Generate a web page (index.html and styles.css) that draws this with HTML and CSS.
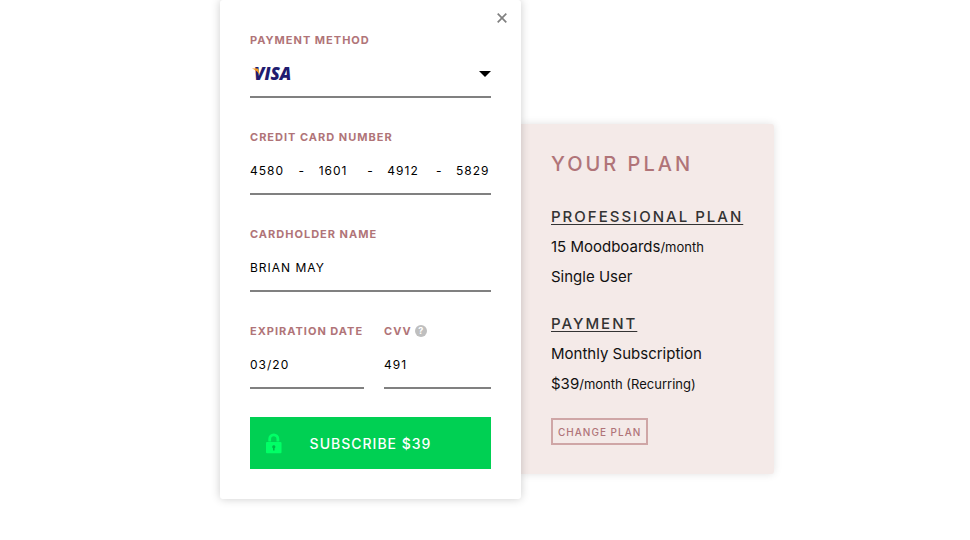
FILE: index.html
```html
<!DOCTYPE html>
<html lang="en">

<head>
    <meta charset="utf-8">
    <meta name="viewport" content="width=device-width, initial-scale=1">
    <title>Checkout</title>
    <link rel="stylesheet" href="styles.css">
</head>

<body>
    <main class="checkout">
        <form class="card">
            <button type="button" class="close" aria-label="Close">
                <svg width="10" height="10" viewBox="0 0 10 10">
                    <path d="M0.7 0.7l8.6 8.6M9.3 0.7l-8.6 8.6" stroke="#808080" stroke-width="1.7" fill="none"/>
                </svg>
            </button>

            <div class="field">
                <label for="method">PAYMENT METHOD</label>
                <div class="select">
                    <select id="method">
                        <option>VISA</option>
                    </select>
                    <svg class="flick" width="8" height="8" viewBox="0 0 8 8">
                        <path d="M0 0.4h4.8c1 0 1.6 0.4 1.8 1.2L7.6 7.6C6.2 4 3.6 1.6 0 0.4z" fill="#f7981d"/>
                    </svg>
                    <svg class="arrow" width="12" height="6" viewBox="0 0 12 6">
                        <path d="M0 0h12L6 6z" fill="#000"/>
                    </svg>
                </div>
            </div>

            <div class="field">
                <label for="number1">CREDIT CARD NUMBER</label>
                <div class="number">
                    <input type="text" id="number1" value="4580" maxlength="4">
                    <span>-</span>
                    <input type="text" value="1601" maxlength="4" aria-label="Second four digits">
                    <span>-</span>
                    <input type="text" value="4912" maxlength="4" aria-label="Third four digits">
                    <span>-</span>
                    <input type="text" value="5829" maxlength="4" aria-label="Last four digits">
                </div>
            </div>

            <div class="field">
                <label for="name">CARDHOLDER NAME</label>
                <input type="text" id="name" value="BRIAN MAY">
            </div>

            <div class="row">
                <div class="field">
                    <label for="expiration">EXPIRATION DATE</label>
                    <input type="text" id="expiration" value="03/20">
                </div>
                <div class="field">
                    <div class="label-row">
                        <label for="cvv">CVV</label>
                        <span class="help">?</span>
                    </div>
                    <input type="text" id="cvv" value="491">
                </div>
            </div>

            <button type="submit" class="subscribe">
                <svg class="lock" width="16" height="21" viewBox="0 0 16 21">
                    <path d="M3.7 8.5V6a4.1 4.1 0 0 1 8.2 0v2.5" stroke="#00ff66" stroke-width="2.8" fill="none"/>
                    <rect y="9" width="15.5" height="11.3" rx="1" fill="#00ff66"/>
                    <path d="M7.8 12.2a1.6 1.6 0 0 1 .8 3v2.3H7v-2.3a1.6 1.6 0 0 1 .8-3z" fill="#00b848"/>
                </svg>
                SUBSCRIBE $39
            </button>
        </form>

        <aside class="plan">
            <h1>YOUR PLAN</h1>
            <section>
                <h2>PROFESSIONAL PLAN</h2>
                <p>15 Moodboards<small>/month</small></p>
                <p>Single User</p>
            </section>
            <section>
                <h2>PAYMENT</h2>
                <p>Monthly Subscription</p>
                <p>$39<small>/month (Recurring)</small></p>
            </section>
            <button type="button" class="change">CHANGE PLAN</button>
        </aside>
    </main>
</body>

</html>
```

FILE: styles.css
```css
* {
    box-sizing: border-box;
}

body {
    min-height: 100vh;
    margin: 0;
    background-color: #fff;
    font-family: Inter, "Liberation Sans", sans-serif;
    color: #111;
}

button,
input,
select {
    font-family: inherit;
}

.checkout {
    display: flex;
    justify-content: center;
    align-items: flex-start;
    padding-left: 24px;
}

.card {
    position: relative;
    z-index: 1;
    flex: 0 1 301px;
    padding: 31px 30px 30px;
    background-color: #fff;
    border-radius: 3px;
    box-shadow: 0 0 10px rgba(0, 0, 0, 0.2);
}

.close {
    position: absolute;
    top: 13px;
    right: 14px;
    display: flex;
    padding: 0;
    background: none;
    border: none;
    cursor: pointer;
}

.field {
    margin-bottom: 30px;
}

label {
    display: block;
    font-size: 11px;
    line-height: 18px;
    font-weight: 700;
    letter-spacing: 1px;
    color: #b07478;
}

input,
select,
.number {
    width: 100%;
    height: 49px;
    padding: 2px 0 0;
    border: none;
    border-bottom: 2px solid #808080;
    border-radius: 0;
    background: none;
    font-size: 12px;
    letter-spacing: 1px;
    color: #000;
}

input,
select {
    display: block;
    outline: none;
}

.select {
    position: relative;
}

.select select {
    appearance: none;
    padding: 2px 0 0 4px;
    font-family: "Open Sans", "Liberation Sans", sans-serif;
    font-size: 17px;
    font-weight: 800;
    font-style: italic;
    letter-spacing: 0;
    color: #211b6f;
}

.flick {
    position: absolute;
    top: 19px;
    left: 2px;
}

.arrow {
    position: absolute;
    top: 22px;
    right: 0;
}

.number {
    display: flex;
    justify-content: space-between;
    align-items: center;
}

.number input {
    width: 35px;
    height: 20px;
    padding: 0;
    border: none;
}

.row {
    display: grid;
    grid-template-columns: 114px 1fr;
    gap: 20px;
}

.row .field {
    margin-bottom: 28px;
}

.label-row {
    display: flex;
    align-items: center;
    gap: 3px;
}

.help {
    width: 12px;
    height: 12px;
    border-radius: 50%;
    background-color: #bfbfbf;
    font-size: 9px;
    line-height: 12px;
    font-weight: 700;
    text-align: center;
    color: #fff;
}

.subscribe {
    position: relative;
    display: block;
    width: 100%;
    height: 52px;
    padding: 0;
    background-color: #00d053;
    border: none;
    font-size: 14px;
    font-weight: 500;
    letter-spacing: 1px;
    color: #fff;
    cursor: pointer;
}

.lock {
    position: absolute;
    top: 16px;
    left: 16px;
}

.plan {
    flex: 0 1 253px;
    margin-top: 124px;
    padding: 26px 20px 29px 30px;
    background-color: #f4eae8;
    border-radius: 0 3px 3px 0;
    box-shadow: 0 0 8px rgba(0, 0, 0, 0.12);
    white-space: nowrap;
}

.plan h1 {
    margin: 0 0 24px;
    font-size: 20px;
    line-height: 28px;
    font-weight: 500;
    letter-spacing: 3px;
    color: #b07478;
}

.plan section {
    margin-bottom: 17px;
}

.plan h2 {
    margin: 0;
    font-size: 15px;
    line-height: 30px;
    font-weight: 500;
    letter-spacing: 2px;
    text-decoration: underline;
    text-underline-offset: 2px;
    color: #333;
}

.plan p {
    margin: 0;
    font-size: 15px;
    line-height: 30px;
}

.plan small {
    font-size: 13px;
}

.change {
    display: block;
    height: 27px;
    margin-top: 19px;
    padding: 0 5px;
    background: none;
    border: 2px solid #cfa6a6;
    font-size: 10px;
    font-weight: 500;
    letter-spacing: 1px;
    color: #b07478;
    cursor: pointer;
}
```
